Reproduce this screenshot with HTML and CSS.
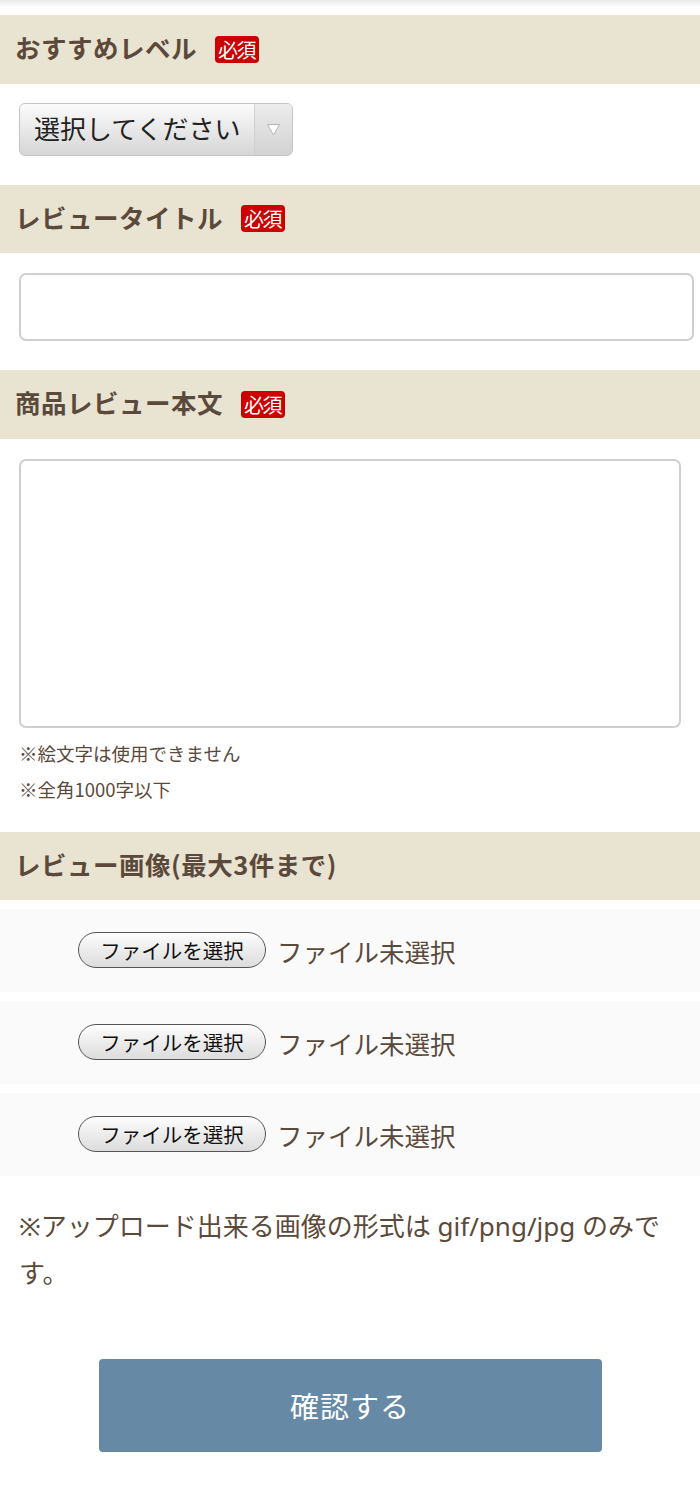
FILE: index.html
```html
<!DOCTYPE html>
<html lang="ja">
<head>
<meta charset="utf-8">
<title>レビュー投稿</title>
<link rel="stylesheet" href="styles.css">
</head>
<body>
<div class="topbar"></div>
<form class="form">
  <div class="sec-head"><span class="sec-title">おすすめレベル</span><span class="req">必須</span></div>
  <div class="sec-body sec-select">
    <div class="select">
      <span class="select-text">選択してください</span>
      <span class="select-arrow"><svg width="15" height="13" viewBox="0 0 15 13"><path d="M1.5 1.5 L13.5 1.5 L7.5 12 Z" fill="#fff" stroke="#b5b5b5" stroke-width="1"/></svg></span>
    </div>
  </div>

  <div class="sec-head"><span class="sec-title">レビュータイトル</span><span class="req">必須</span></div>
  <div class="sec-body sec-input">
    <input class="text-input" type="text">
  </div>

  <div class="sec-head"><span class="sec-title">商品レビュー本文</span><span class="req">必須</span></div>
  <div class="sec-body sec-textarea">
    <textarea class="textarea"></textarea>
    <p class="small-note">※絵文字は使用できません</p>
    <p class="small-note">※全角1000字以下</p>
  </div>

  <div class="sec-head"><span class="sec-title">レビュー画像(最大3件まで)</span></div>
  <div class="file-list">
    <div class="file-row"><span class="file-btn">ファイルを選択</span><span class="file-status">ファイル未選択</span></div>
    <div class="file-row"><span class="file-btn">ファイルを選択</span><span class="file-status">ファイル未選択</span></div>
    <div class="file-row"><span class="file-btn">ファイルを選択</span><span class="file-status">ファイル未選択</span></div>
  </div>
  <p class="upload-note">※アップロード出来る画像の形式は gif/png/jpg のみです。</p>

  <div class="submit-wrap"><button type="button" class="submit">確認する</button></div>
</form>
</body>
</html>
```

FILE: styles.css
```css
* { box-sizing: border-box; }
html, body { margin: 0; padding: 0; background: #fff; }
body {
  width: 700px;
  font-family: "Noto Sans", "Noto Sans CJK JP", sans-serif;
  color: #5b4a3b;
}
.topbar {
  height: 6px;
  background: linear-gradient(#e9e9e9, #fbfbfb);
  margin-bottom: 9px;
}
.form { margin: 0; }
.sec-head {
  height: 68.5px;
  background: #e9e3d1;
  display: flex;
  align-items: center;
  padding-left: 15px;
}
.sec-title {
  font-family: "Noto Sans CJK JP", sans-serif;
  font-weight: 700;
  font-size: 25.5px;
  line-height: 36px;
  margin-bottom: 4px;
  color: #5b4a3b;
  letter-spacing: 0.5px;
}
.req {
  margin-left: 18px;
  width: 44px;
  height: 27px;
  background: #cc0000;
  color: #fff;
  font-family: "Noto Sans CJK JP", sans-serif;
  font-size: 20px;
  line-height: 27px;
  text-align: center;
  border-radius: 4px;
  letter-spacing: -1.5px;
  padding-right: 1px;
}
.sec-body { padding-left: 19px; }
.sec-select { padding-top: 19px; padding-bottom: 29px; }
.select {
  width: 274px;
  height: 53px;
  border: 1px solid #c4c4c4;
  border-radius: 6px;
  background: linear-gradient(#fbfbfb, #d6d6d6);
  display: flex;
  align-items: center;
  overflow: hidden;
}
.select-text {
  flex: 1;
  padding-left: 14px;
  font-family: "Noto Sans CJK JP", sans-serif;
  font-size: 26px;
  color: #222;
  line-height: 1;
  margin-bottom: 3px;
}
.select-arrow {
  width: 38px;
  height: 100%;
  border-left: 1px solid #d0d0d0;
  background: linear-gradient(#ececec, #d2d2d2);
  display: flex;
  align-items: center;
  justify-content: center;
}
.sec-input { padding-top: 20px; padding-bottom: 29px; }
.text-input {
  display: block;
  width: 675px;
  height: 68px;
  border: 2px solid #cfcfcf;
  border-radius: 7px;
  background: #fff;
  margin: 0;
  padding: 0 10px;
  font-size: 24px;
  outline: none;
}
.sec-textarea { padding-top: 20px; padding-bottom: 25px; }
.textarea {
  display: block;
  width: 662px;
  height: 269px;
  border: 2px solid #cfcfcf;
  border-radius: 7px;
  background: #fff;
  margin: 0 0 7px;
  padding: 8px;
  resize: none;
  outline: none;
}
.small-note {
  margin: 0;
  font-family: "Noto Sans CJK JP", sans-serif;
  font-size: 18.5px;
  line-height: 36px;
  color: #5b4a3b;
}
.file-list {
  display: flex;
  flex-direction: column;
  gap: 9px;
  padding-top: 8.5px;
}
.file-row {
  height: 83px;
  background: #fafafa;
  display: flex;
  align-items: center;
  padding-left: 78px;
}
.file-btn {
  width: 188px;
  height: 36px;
  border: 1.5px solid #555;
  border-radius: 18px;
  background: linear-gradient(#fdfdfd, #dcdcdc);
  display: flex;
  align-items: center;
  justify-content: center;
  font-family: "Noto Sans CJK JP", sans-serif;
  font-size: 20.5px;
  color: #111;
}
.file-status {
  margin-left: 11px;
  font-family: "Noto Sans CJK JP", sans-serif;
  font-size: 25.5px;
  color: #5b4a3b;
}
.upload-note {
  margin: 27px 0 0;
  padding: 0 19px;
  font-size: 26px;
  line-height: 47px;
  color: #5b4a3b;
}
.submit-wrap {
  display: flex;
  justify-content: center;
  padding: 62px 0 48px;
}
.submit {
  width: 503px;
  height: 93px;
  border: none;
  border-radius: 4px;
  background: #6689a6;
  color: #fff;
  font-family: "Noto Sans CJK JP", sans-serif;
  font-size: 29px;
  letter-spacing: 1px;
  cursor: pointer;
}
```
